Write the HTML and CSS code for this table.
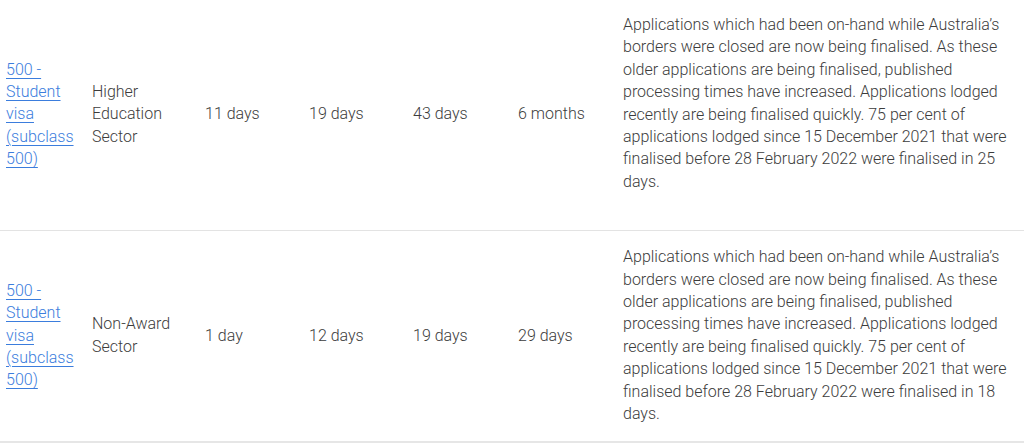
FILE: index.html
```html
<!DOCTYPE html>
<html lang="en">
<head>
<meta charset="utf-8">
<title>Processing times</title>
<link rel="stylesheet" href="styles.css">
</head>
<body>
<table class="times">
  <colgroup>
    <col class="c-visa">
    <col class="c-stream">
    <col class="c-num">
    <col class="c-num">
    <col class="c-num2">
    <col class="c-num2">
    <col class="c-desc">
  </colgroup>
  <tbody>
    <tr>
      <td><a href="#" class="visa-link">500 - Student visa (subclass 500)</a></td>
      <td>Higher Education Sector</td>
      <td>11 days</td>
      <td>19 days</td>
      <td>43 days</td>
      <td>6 months</td>
      <td class="desc desc-extra">Applications which had been on-hand while Australia’s borders were closed are now being finalised. As these older applications are being finalised, published processing times have increased. Applications lodged recently are being finalised quickly. 75 per cent of applications lodged since 15 December 2021 that were finalised before 28 February 2022 were finalised in 25 days.</td>
    </tr>
    <tr>
      <td><a href="#" class="visa-link">500 - Student visa (subclass 500)</a></td>
      <td>Non-Award Sector</td>
      <td>1 day</td>
      <td>12 days</td>
      <td>19 days</td>
      <td>29 days</td>
      <td class="desc">Applications which had been on-hand while Australia’s borders were closed are now being finalised. As these older applications are being finalised, published processing times have increased. Applications lodged recently are being finalised quickly. 75 per cent of applications lodged since 15 December 2021 that were finalised before 28 February 2022 were finalised in 18 days.</td>
    </tr>
  </tbody>
</table>
</body>
</html>
```
FILE: styles.css
```css
html, body {
  margin: 0;
  padding: 0;
  background: #ffffff;
}

body {
  font-family: Roboto, "Liberation Sans", Arial, sans-serif;
  font-size: 16px;
  font-weight: 300;
  line-height: 22.4px;
  color: #3c3c3c;
}

.times {
  width: 1024px;
  margin-top: -1px;
  border-collapse: collapse;
  table-layout: fixed;
}

.c-visa { width: 86px; }
.c-stream { width: 113px; }
.c-num { width: 104px; }
.c-num2 { width: 105px; }
.c-desc { width: 407px; }

.times td {
  padding: 15px 6px;
  vertical-align: middle;
  text-align: left;
  border-bottom: 1px solid #e3e3e3;
}

.times tr:last-child td {
  border-bottom: 2px solid #e6e6e6;
}

.times td.desc-extra {
  padding-bottom: 37px;
}

.visa-link {
  color: #3b7ddd;
  text-decoration: underline;
  text-underline-offset: 3px;
  text-decoration-thickness: 1px;
}
```
